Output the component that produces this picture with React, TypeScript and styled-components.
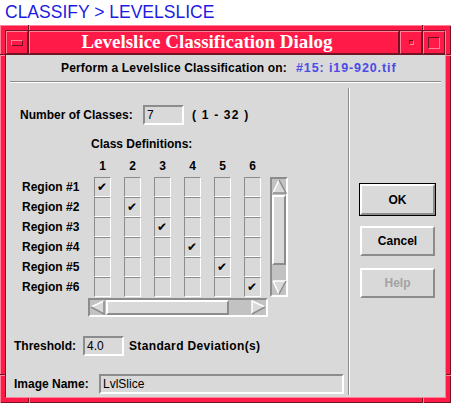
import styled, { createGlobalStyle } from 'styled-components';

const GlobalStyle = createGlobalStyle`
    html, body {
        margin: 0;
        padding: 0;
        background: #ffffff;
    }
`;

const RED = '#ff1a48';
const RED_LIGHT = '#ff8299';
const RED_DARK = '#6e1424';
const GRAY = '#d9d9d9';
const SHADE = '#8c8c8c';
const TROUGH = '#c2c2c2';

const Page = styled.div`
    width: 451px;
    height: 405px;
    overflow: hidden;
    font-family: 'Liberation Sans', Arial, sans-serif;
`;

const Breadcrumb = styled.div`
    height: 25px;
    padding-left: 5px;
    font-size: 17.5px;
    line-height: 25px;
    color: #1c1ce0;
`;

const Window = styled.div`
    position: relative;
    width: 451px;
    height: 378px;
    box-sizing: border-box;
    background: ${RED};
    padding: 5px;
    box-shadow: inset 1px 1px 0 ${RED_LIGHT}, inset -1px -1px 0 ${RED_DARK};
`;

const Notch = styled.span<{ $vertical?: boolean }>`
    position: absolute;
    background: ${RED_LIGHT};
    ${(p) =>
        p.$vertical
            ? `width: 1px; height: 5px; border-left: 1px solid ${RED_DARK};`
            : `width: 5px; height: 1px; border-top: 1px solid ${RED_DARK};`}
`;

const Inner = styled.div`
    height: 100%;
    box-sizing: border-box;
    border: 1px solid;
    border-color: ${RED_DARK} ${RED_LIGHT} ${RED_LIGHT} ${RED_DARK};
    display: flex;
    flex-direction: column;
    background: ${RED_DARK};
`;

const TitleBar = styled.div`
    display: flex;
    height: 23px;
    gap: 1px;
    margin-bottom: 1px;
`;

const TitleButton = styled.div`
    width: 22px;
    box-sizing: border-box;
    background: ${RED};
    border: 1px solid;
    border-color: ${RED_LIGHT} ${RED_DARK} ${RED_DARK} ${RED_LIGHT};
    display: flex;
    align-items: center;
    justify-content: center;
`;

const MenuGlyph = styled.span`
    width: 10px;
    height: 4px;
    border: 1px solid;
    border-color: ${RED_LIGHT} ${RED_DARK} ${RED_DARK} ${RED_LIGHT};
`;

const BoxGlyph = styled.span<{ $size: number }>`
    width: ${(p) => p.$size}px;
    height: ${(p) => p.$size}px;
    border: 1px solid;
    border-color: ${RED_DARK} ${RED_LIGHT} ${RED_LIGHT} ${RED_DARK};
`;

const Title = styled.div`
    flex: 1;
    box-sizing: border-box;
    background: ${RED};
    border: 1px solid;
    border-color: ${RED_LIGHT} ${RED_DARK} ${RED_DARK} ${RED_LIGHT};
    color: #ffffff;
    font-family: 'Liberation Serif', 'Times New Roman', serif;
    font-weight: bold;
    font-size: 19px;
    line-height: 20px;
    text-align: center;
    padding-right: 14px;
`;

const Body = styled.div`
    flex: 1;
    background: ${GRAY};
    display: flex;
    flex-direction: column;
    font-size: 12px;
    font-weight: bold;
    color: #000000;
`;

const Subtitle = styled.div`
    height: 26px;
    line-height: 26px;
    padding-left: 55px;
    display: flex;
    gap: 9px;
    letter-spacing: 0.15px;
`;

const SourceName = styled.span`
    color: #4b4be6;
    font-size: 12.5px;
    letter-spacing: 0.9px;
`;

const HRule = styled.div`
    margin: 0 4px;
    height: 1px;
    background: ${SHADE};
    border-bottom: 1px solid #ffffff;
`;

const Main = styled.div`
    flex: 1;
    display: flex;
`;

const Form = styled.div`
    width: 342px;
    display: flex;
    flex-direction: column;
    padding-top: 22px;
`;

const VRule = styled.div`
    margin: 5px 0 2px;
    width: 1px;
    background: ${SHADE};
    border-right: 1px solid #ffffff;
`;

const Actions = styled.div`
    flex: 1;
    display: flex;
    flex-direction: column;
    padding: 100px 0 0 10px;
`;

const Row = styled.div<{ $indent: number; $gap?: number; $top?: number }>`
    display: flex;
    align-items: center;
    height: 20px;
    padding-left: ${(p) => p.$indent}px;
    margin-top: ${(p) => p.$top ?? 0}px;
    gap: ${(p) => p.$gap ?? 0}px;
`;

const Label = styled.span<{ $width: number }>`
    width: ${(p) => p.$width}px;
    flex: none;
`;

const Hint = styled.span<{ $spacing?: number }>`
    letter-spacing: ${(p) => p.$spacing ?? 0}px;
    white-space: pre;
`;

const Field = styled.div<{ $width: number }>`
    width: ${(p) => p.$width}px;
    height: 20px;
    box-sizing: border-box;
    border: 2px solid;
    border-color: ${SHADE} #ffffff #ffffff ${SHADE};
    background: ${GRAY};
    font-weight: normal;
    font-size: 12px;
    line-height: 16px;
    padding-left: 2px;
`;

const Heading = styled.div`
    padding-left: 85px;
    margin-top: 11px;
    height: 16px;
    line-height: 16px;
`;

const Grid = styled.div`
    display: grid;
    grid-template-columns: 72px repeat(5, 30px) 26px 18px;
    grid-template-rows: 20px repeat(6, 20px) 20px;
    margin: 5px 0 0 16px;
`;

const ColNum = styled.div`
    width: 17px;
    text-align: center;
    line-height: 18px;
    margin-bottom: 2px;
`;

const RegionLabel = styled.div`
    line-height: 20px;
`;

const Cell = styled.div`
    width: 17px;
    height: 20px;
    box-sizing: border-box;
    border: 1px solid;
    border-color: ${SHADE} #ffffff #ffffff ${SHADE};
    position: relative;
`;

const Check = styled.span`
    position: absolute;
    left: 2px;
    top: 1px;
    font-family: 'DejaVu Sans', sans-serif;
    font-size: 12px;
    line-height: 16px;
    font-weight: bold;
`;

const VScroll = styled.div`
    grid-column: 8;
    grid-row: 2 / span 6;
    box-sizing: border-box;
    border: 2px solid;
    border-color: ${SHADE} #ffffff #ffffff ${SHADE};
    background: ${TROUGH};
    display: flex;
    flex-direction: column;
`;

const HScroll = styled.div`
    grid-column: 2 / span 6;
    grid-row: 8;
    margin-left: -6px;
    margin-top: 1px;
    width: 180px;
    height: 19px;
    box-sizing: border-box;
    border: 2px solid;
    border-color: ${SHADE} #ffffff #ffffff ${SHADE};
    background: ${TROUGH};
    display: flex;
`;

const Thumb = styled.div<{ $size: number; $vertical?: boolean }>`
    ${(p) => (p.$vertical ? `height: ${p.$size}px;` : `width: ${p.$size}px;`)}
    box-sizing: border-box;
    background: ${GRAY};
    border: 2px solid;
    border-color: #ffffff ${SHADE} ${SHADE} #ffffff;
    margin: ${(p) => (p.$vertical ? '1px 0' : '0 1px')};
`;

const Gap = styled.div`
    flex: 1;
`;

const Arrow = ({ dir }: { dir: 'up' | 'down' | 'left' | 'right' }) => {
    const shapes = {
        up: { pts: '7,1 1,14 14,14', hi: 'M1,14 L7,1', lo: 'M7,1 L14,14 L1,14' },
        down: { pts: '1,1 14,1 7,14', hi: 'M1,1 L14,1 M1,1 L7,14', lo: 'M7,14 L14,1' },
        left: { pts: '1,7 14,1 14,14', hi: 'M1,7 L14,1', lo: 'M1,7 L14,14 L14,1' },
        right: { pts: '1,1 14,7 1,14', hi: 'M1,14 L1,1 L14,7', lo: 'M14,7 L1,14' },
    }[dir];
    return (
        <svg width="15" height="15" viewBox="0 0 15 15" style={{ flex: 'none', display: 'block' }}>
            <polygon points={shapes.pts} fill={GRAY} />
            <path d={shapes.hi} stroke="#ffffff" strokeWidth="1.5" fill="none" />
            <path d={shapes.lo} stroke={SHADE} strokeWidth="1.5" fill="none" />
        </svg>
    );
};

const Button = styled.div<{ $disabled?: boolean; $default?: boolean }>`
    width: 75px;
    height: ${(p) => (p.$default ? 31 : 30)}px;
    box-sizing: border-box;
    border: 2px solid;
    border-color: #ffffff ${SHADE} ${SHADE} #ffffff;
    display: flex;
    align-items: center;
    justify-content: center;
    color: ${(p) => (p.$disabled ? '#a3a3a3' : '#000000')};
    margin-bottom: 12px;
    ${(p) => p.$default && `outline: 1px solid #000000; margin-top: 1px; margin-bottom: 11px;`}
`;

const columns = [1, 2, 3, 4, 5, 6];

export default function App() {
    return (
        <Page>
            <GlobalStyle />
            <Breadcrumb>CLASSIFY &gt; LEVELSLICE</Breadcrumb>
            <Window>
                <Notch $vertical style={{ left: 28, top: 0 }} />
                <Notch $vertical style={{ left: 422, top: 0 }} />
                <Notch $vertical style={{ left: 28, bottom: 0 }} />
                <Notch $vertical style={{ left: 422, bottom: 0 }} />
                <Notch style={{ left: 0, top: 29 }} />
                <Notch style={{ right: 0, top: 29 }} />
                <Notch style={{ left: 0, top: 349 }} />
                <Notch style={{ right: 0, top: 349 }} />
                <Inner>
                    <TitleBar>
                        <TitleButton>
                            <MenuGlyph />
                        </TitleButton>
                        <Title>Levelslice Classification Dialog</Title>
                        <TitleButton>
                            <BoxGlyph $size={3} />
                        </TitleButton>
                        <TitleButton>
                            <BoxGlyph $size={10} />
                        </TitleButton>
                    </TitleBar>
                    <Body>
                        <Subtitle>
                            <span>Perform a Levelslice Classification on:</span>
                            <SourceName>#15: i19-920.tif</SourceName>
                        </Subtitle>
                        <HRule />
                        <Main>
                            <Form>
                                <Row $indent={14} $gap={8}>
                                    <Label $width={115}>Number of Classes:</Label>
                                    <Field $width={41}>7</Field>
                                    <Hint $spacing={1.2}>( 1 - 32 )</Hint>
                                </Row>
                                <Heading>Class Definitions:</Heading>
                                <Grid>
                                    <div />
                                    {columns.map((c) => (
                                        <ColNum key={c}>{c}</ColNum>
                                    ))}
                                    <div />
                                    {columns.map((r) => [
                                        <RegionLabel key={`l${r}`}>Region #{r}</RegionLabel>,
                                        ...columns.map((c) => (
                                            <Cell key={`${r}-${c}`}>{r === c && <Check>✔</Check>}</Cell>
                                        )),
                                    ])}
                                    <VScroll>
                                        <Arrow dir="up" />
                                        <Thumb $vertical $size={70} />
                                        <Gap />
                                        <Arrow dir="down" />
                                    </VScroll>
                                    <HScroll>
                                        <Arrow dir="left" />
                                        <Thumb $size={123} />
                                        <Gap />
                                        <Arrow dir="right" />
                                    </HScroll>
                                </Grid>
                                <Row $indent={8} $gap={5} $top={19}>
                                    <Label $width={64}>Threshold:</Label>
                                    <Field $width={41}>4.0</Field>
                                    <Hint $spacing={0.35}>Standard Deviation(s)</Hint>
                                </Row>
                                <Row $indent={8} $top={18}>
                                    <Label $width={85}>Image Name:</Label>
                                    <Field $width={245}>LvlSlice</Field>
                                </Row>
                            </Form>
                            <VRule />
                            <Actions>
                                <Button $default>OK</Button>
                                <Button>Cancel</Button>
                                <Button $disabled>Help</Button>
                            </Actions>
                        </Main>
                    </Body>
                </Inner>
            </Window>
        </Page>
    );
}
